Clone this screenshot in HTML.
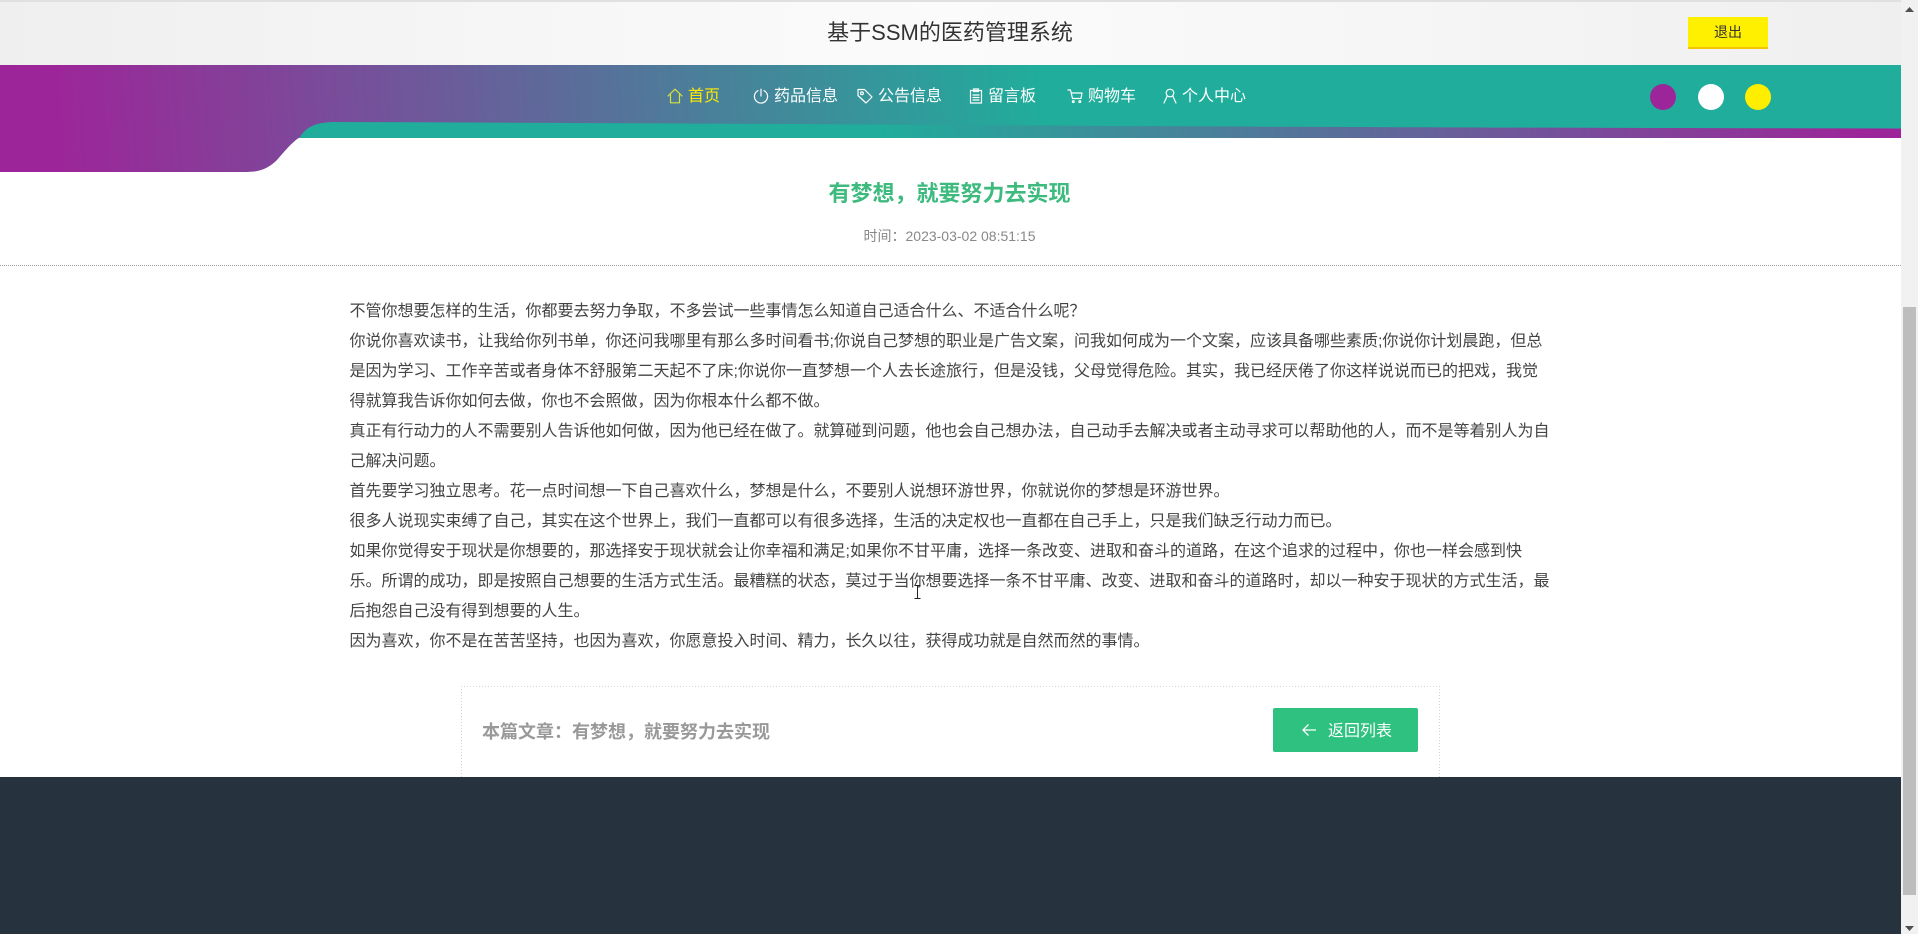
<!DOCTYPE html>
<html lang="zh-CN">
<head>
<meta charset="utf-8">
<title>基于SSM的医药管理系统</title>
<style>
*{box-sizing:border-box;margin:0;padding:0}
html,body{width:1918px;height:934px;overflow:hidden;background:#fff}
body{font-family:"Liberation Sans","Noto Sans CJK SC",sans-serif;position:relative}
.a{position:absolute;white-space:nowrap}
#top{left:0;top:0;width:1901px;height:65px;background:linear-gradient(90deg,#efefef 0%,#f8f8f8 35%,#fbfbfb 50%,#f8f8f8 65%,#efefef 100%);border-top:2px solid #e0e0e0}
#title{left:0;width:1900px;top:18px;text-align:center;font-size:22px;line-height:30px;color:#333}
#exit{left:1688px;top:17px;width:80px;height:32px;background:#fff000;border-bottom:2px solid #f5c400;color:#333;font-size:14px;line-height:31px;text-align:center}
.n{font-size:16px;line-height:24px;top:85px;color:#fff}
.n.on{color:#ffea00}
.ic{position:absolute;top:88px;width:16px;height:16px;fill:none;stroke:#fff;stroke-width:1.2;stroke-linecap:round;stroke-linejoin:round}
.c{position:absolute;top:84px;width:26px;height:26px;border-radius:50%}
#h{left:0;width:1899px;top:178px;text-align:center;font-size:22px;line-height:32px;font-weight:bold;color:#3dba7e}
#t{left:0;width:1899px;top:226px;text-align:center;font-size:14px;line-height:20px;color:#888}
#ln{left:0;top:265px;width:1901px;border-top:1px dotted #999}
#body{left:349.5px;top:297px;font-size:16px;line-height:30px;color:#444}
#box{left:461px;top:686px;width:979px;height:91px;background:
repeating-linear-gradient(90deg,#d4d4d4 0 1px,transparent 1px 3px) top left/100% 1px no-repeat,
repeating-linear-gradient(0deg,#d4d4d4 0 1px,transparent 1px 3px) top left/1px 100% no-repeat,
repeating-linear-gradient(0deg,#d4d4d4 0 1px,transparent 1px 3px) top right/1px 100% no-repeat}
#bt{left:482px;top:718px;font-size:18px;line-height:28px;font-weight:bold;color:#999}
#btn{left:1273px;top:708px;width:145px;height:44px;background:#2fc17f;border-radius:2px;color:#fff;font-size:16px;line-height:47px;padding-left:55px}
#foot{left:0;top:777px;width:1901px;height:157px;background:#27323f}
#sb{left:1901px;top:0;width:17px;height:934px;background:#f1f1f1}
#th{left:1903px;top:307px;width:13px;height:588px;background:#bdbdbd}
</style>
</head>
<body>
<div class="a" id="top"></div>
<svg class="a" style="left:0;top:65px" width="1901" height="110" viewBox="0 65 1901 110">
<defs>
<linearGradient id="g1" gradientUnits="userSpaceOnUse" x1="60" y1="150" x2="1040" y2="80">
<stop offset="0" stop-color="#9c2699"/><stop offset="1" stop-color="#20ad9b"/>
</linearGradient>
<linearGradient id="g2" gradientUnits="userSpaceOnUse" x1="880" y1="0" x2="1860" y2="0">
<stop offset="0" stop-color="#20ad9b"/><stop offset="1" stop-color="#9c2699"/>
</linearGradient>
</defs>
<rect x="290" y="115" width="1611" height="23" fill="url(#g2)"/>
<path d="M0 65H1901V128.5C1600 128 1300 127 1107 126C900 124.5 600 123 335 122C316 122 306 127 300 137C292 142 284 152 277 160C269 168 260 172 247 172H0Z" fill="url(#g1)"/>
</svg>
<div class="a" id="title">基于SSM的医药管理系统</div>
<div class="a" id="exit">退出</div>

<svg class="ic" style="left:667px;stroke:#d7e33a" viewBox="0 0 16 16"><path d="M1 8L8 1.2 15 8M3.5 6.5V14.8H12.5V6.5"/></svg>
<div class="a n on" style="left:688px">首页</div>
<svg class="ic" style="left:753px" viewBox="0 0 16 16"><path d="M5 2.6A6.6 6.6 0 1 0 11 2.6M8 1.2V8"/></svg>
<div class="a n" style="left:774px">药品信息</div>
<svg class="ic" style="left:857px" viewBox="0 0 16 16"><path d="M1 1.5H7.5L15 9 9 15 1 7.5Z"/><circle cx="5" cy="5.3" r="1.4"/></svg>
<div class="a n" style="left:878px">公告信息</div>
<svg class="ic" style="left:968px" viewBox="0 0 16 16"><path d="M2.5 2.5H13.5V15H2.5ZM5.5 1H10.5V3.5H5.5ZM5 7H11M5 9.5H11M5 12H11"/></svg>
<div class="a n" style="left:988px">留言板</div>
<svg class="ic" style="left:1067px" viewBox="0 0 16 16"><path d="M1 2H3.5L5.5 10.5H14L15 5H4.5"/><circle cx="6.3" cy="13.6" r=".9"/><circle cx="12.8" cy="13.6" r=".9"/></svg>
<div class="a n" style="left:1088px">购物车</div>
<svg class="ic" style="left:1162px" viewBox="0 0 16 16"><circle cx="8" cy="5" r="3.8"/><path d="M5.2 8L2 15M10.8 8L14 15"/></svg>
<div class="a n" style="left:1182px">个人中心</div>

<div class="c" style="left:1650px;background:#9c2699"></div>
<div class="c" style="left:1698px;background:#fff"></div>
<div class="c" style="left:1745px;background:#ffee00"></div>

<div class="a" id="h">有梦想&#65292;就要努力去实现</div>
<div class="a" id="t">时间&#65306;2023-03-02 08:51:15</div>
<div class="a" id="ln"></div>

<div class="a" id="body">不管你想要怎样的生活&#65292;你都要去努力争取&#65292;不多尝试一些事情怎么知道自己适合什么、不适合什么呢&#65311;<br>
你说你喜欢读书&#65292;让我给你列书单&#65292;你还问我哪里有那么多时间看书;你说自己梦想的职业是广告文案&#65292;问我如何成为一个文案&#65292;应该具备哪些素质;你说你计划晨跑&#65292;但总<br>
是因为学习、工作辛苦或者身体不舒服第二天起不了床;你说你一直梦想一个人去长途旅行&#65292;但是没钱&#65292;父母觉得危险。其实&#65292;我已经厌倦了你这样说说而已的把戏&#65292;我觉<br>
得就算我告诉你如何去做&#65292;你也不会照做&#65292;因为你根本什么都不做。<br>
真正有行动力的人不需要别人告诉他如何做&#65292;因为他已经在做了。就算碰到问题&#65292;他也会自己想办法&#65292;自己动手去解决或者主动寻求可以帮助他的人&#65292;而不是等着别人为自<br>
己解决问题。<br>
首先要学习独立思考。花一点时间想一下自己喜欢什么&#65292;梦想是什么&#65292;不要别人说想环游世界&#65292;你就说你的梦想是环游世界。<br>
很多人说现实束缚了自己&#65292;其实在这个世界上&#65292;我们一直都可以有很多选择&#65292;生活的决定权也一直都在自己手上&#65292;只是我们缺乏行动力而已。<br>
如果你觉得安于现状是你想要的&#65292;那选择安于现状就会让你幸福和满足;如果你不甘平庸&#65292;选择一条改变、进取和奋斗的道路&#65292;在这个追求的过程中&#65292;你也一样会感到快<br>
乐。所谓的成功&#65292;即是按照自己想要的生活方式生活。最糟糕的状态&#65292;莫过于当你想要选择一条不甘平庸、改变、进取和奋斗的道路时&#65292;却以一种安于现状的方式生活&#65292;最<br>
后抱怨自己没有得到想要的人生。<br>
因为喜欢&#65292;你不是在苦苦坚持&#65292;也因为喜欢&#65292;你愿意投入时间、精力&#65292;长久以往&#65292;获得成功就是自然而然的事情。</div>

<svg class="a" style="left:913px;top:585px" width="9" height="14" viewBox="0 0 9 14"><path d="M1.5 .5H7.5M4.5 .5V13.5M1.5 13.5H7.5" stroke="#222" stroke-width="1" fill="none"/></svg>

<div class="a" id="box"></div>
<div class="a" id="bt">本篇文章&#65306;有梦想&#65292;就要努力去实现</div>
<div class="a" id="btn">返回列表</div>
<svg class="a" style="left:1301px;top:723px" width="16" height="14" viewBox="0 0 16 14"><path d="M15 7H2M7.5 1.5L2 7 7.5 12.5" stroke="#fff" stroke-width="1.3" fill="none"/></svg>

<div class="a" id="foot"></div>
<div class="a" id="sb"></div>
<div class="a" id="th"></div>
<svg class="a" style="left:1904px;top:6px" width="11" height="7" viewBox="0 0 11 7"><path d="M5.5 1L10 6H1Z" fill="#505050"/></svg>
<svg class="a" style="left:1904px;top:925px" width="11" height="7" viewBox="0 0 11 7"><path d="M1 1H10L5.5 6Z" fill="#505050"/></svg>
</body>
</html>
